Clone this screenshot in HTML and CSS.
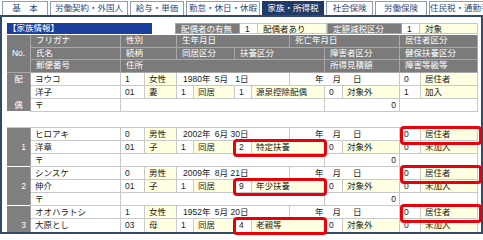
FILE: index.html
```html
<!DOCTYPE html>
<html lang="ja">
<head>
<meta charset="utf-8">
<title>家族・所得税</title>
<link rel="stylesheet" href="styles.css">
</head>
<body>
<div class="tabs">
  <div class="tab w46">基　本</div>
  <div class="tab w78">労働契約・外国人</div>
  <div class="tab w54">給与・単価</div>
  <div class="tab w74">勤怠・休日・休暇</div>
  <div class="tab w62 on">家族・所得税</div>
  <div class="tab w47">社会保険</div>
  <div class="tab w52">労働保険</div>
  <div class="tab w70">住民税・通勤手当</div>
</div>
<div class="frame">
  <div class="topbar">
    <div class="title">【家族情報】</div>
    <div class="lbl lw1">配偶者の有無</div>
    <div class="code">1</div>
    <div class="val vw1">配偶者あり</div>
    <div class="lbl lw2">定額減税区分</div>
    <div class="code">1</div>
    <div class="val vw2">対象</div>
  </div>

  <div class="grid ghead">
    <div class="h hno">No.</div>
    <div class="h">フリガナ</div>
    <div class="h s2">性別</div>
    <div class="h s4">生年月日</div>
    <div class="h s3">死亡年月日</div>
    <div class="h s2">居住者区分</div>
    <div class="h">氏名</div>
    <div class="h s2">続柄</div>
    <div class="h s2">同居区分</div>
    <div class="h s3">扶養区分</div>
    <div class="h s2">障害者区分</div>
    <div class="h s2">健保扶養区分</div>
    <div class="h">郵便番号</div>
    <div class="h s7">住所</div>
    <div class="h s2">所得見積額</div>
    <div class="h s2">障害等級等</div>
  </div>

  <!-- spouse -->
  <div class="grid blk">
    <div class="c n ctr">配</div>
    <div class="c">ヨウコ</div>
    <div class="c">1</div>
    <div class="c y">女性</div>
    <div class="c s4"><span class="dy">1980</span>年<span class="dm">5</span>月<span class="dd">1</span>日</div>
    <div class="c s3"><span class="dy"></span>年<span class="dm"></span>月<span class="dd"></span>日</div>
    <div class="c">0</div>
    <div class="c y">居住者</div>

    <div class="c n"></div>
    <div class="c">洋子</div>
    <div class="c">01</div>
    <div class="c y">妻</div>
    <div class="c">1</div>
    <div class="c y">同居</div>
    <div class="c">1</div>
    <div class="c y s2">源泉控除配偶</div>
    <div class="c">0</div>
    <div class="c y">対象外</div>
    <div class="c">1</div>
    <div class="c y">加入</div>

    <div class="c n ctr e">偶</div>
    <div class="c">〒</div>
    <div class="c s7"></div>
    <div class="c s2 r">0</div>
    <div class="c s2"></div>
  </div>

  <div class="spacer"></div>

  <!-- 1 -->
  <div class="grid blk">
    <div class="c n"></div>
    <div class="c">ヒロアキ</div>
    <div class="c">0</div>
    <div class="c y">男性</div>
    <div class="c s4"><span class="dy">2002</span>年<span class="dm">6</span>月<span class="dd">30</span>日</div>
    <div class="c s3"><span class="dy"></span>年<span class="dm"></span>月<span class="dd"></span>日</div>
    <div class="c rel">0<span class="mk res"></span></div>
    <div class="c y">居住者</div>

    <div class="c n">1</div>
    <div class="c">洋章</div>
    <div class="c">01</div>
    <div class="c y">子</div>
    <div class="c">1</div>
    <div class="c y">同居</div>
    <div class="c rel">2<span class="mk fy"></span></div>
    <div class="c y s2">特定扶養</div>
    <div class="c">0</div>
    <div class="c y">対象外</div>
    <div class="c">0</div>
    <div class="c y">未加入</div>

    <div class="c n e"></div>
    <div class="c">〒</div>
    <div class="c s7"></div>
    <div class="c s2 r">0</div>
    <div class="c s2"></div>
  </div>

  <!-- 2 -->
  <div class="grid blk">
    <div class="c n"></div>
    <div class="c">シンスケ</div>
    <div class="c">0</div>
    <div class="c y">男性</div>
    <div class="c s4"><span class="dy">2009</span>年<span class="dm">8</span>月<span class="dd">21</span>日</div>
    <div class="c s3"><span class="dy"></span>年<span class="dm"></span>月<span class="dd"></span>日</div>
    <div class="c rel">0<span class="mk res"></span></div>
    <div class="c y">居住者</div>

    <div class="c n">2</div>
    <div class="c">伸介</div>
    <div class="c">01</div>
    <div class="c y">子</div>
    <div class="c">1</div>
    <div class="c y">同居</div>
    <div class="c rel">9<span class="mk fy"></span></div>
    <div class="c y s2">年少扶養</div>
    <div class="c">0</div>
    <div class="c y">対象外</div>
    <div class="c">0</div>
    <div class="c y">未加入</div>

    <div class="c n e"></div>
    <div class="c">〒</div>
    <div class="c s7"></div>
    <div class="c s2 r">0</div>
    <div class="c s2"></div>
  </div>

  <!-- 3 -->
  <div class="grid blk">
    <div class="c n"></div>
    <div class="c">オオハラトシ</div>
    <div class="c">1</div>
    <div class="c y">女性</div>
    <div class="c s4"><span class="dy">1952</span>年<span class="dm">5</span>月<span class="dd">20</span>日</div>
    <div class="c s3"><span class="dy"></span>年<span class="dm"></span>月<span class="dd"></span>日</div>
    <div class="c rel">0<span class="mk res"></span></div>
    <div class="c y">居住者</div>

    <div class="c n last">3</div>
    <div class="c last">大原とし</div>
    <div class="c last">03</div>
    <div class="c y last">母</div>
    <div class="c last">1</div>
    <div class="c y last">同居</div>
    <div class="c rel last">4<span class="mk fy"></span></div>
    <div class="c y s2 last">老親等</div>
    <div class="c last">0</div>
    <div class="c y last">対象外</div>
    <div class="c last">0</div>
    <div class="c y last">未加入</div>
  </div>
</div>
</body>
</html>
```

FILE: styles.css
```css
* { box-sizing: border-box; }
html, body { margin: 0; padding: 0; }
body {
  width: 483px;
  height: 236px;
  overflow: hidden;
  background: #fff;
  font-family: "Liberation Sans", "Noto Sans CJK JP", sans-serif;
  font-size: 8.5px;
  color: #1a1a1a;
}

/* tabs */
.tabs {
  display: flex;
  gap: 2px;
  height: 15px;
  padding: 1px 0 0 2px;
  overflow: hidden;
  white-space: nowrap;
}
.tab {
  flex: none;
  height: 14px;
  border: 1px solid #8d9db5;
  border-bottom: none;
  background: #fff;
  color: #2c4a78;
  line-height: 13px;
  text-align: center;
}
.tab.on { background: #1f3a66; border-color: #1f3a66; color: #fff; }
.w46 { width: 46px; }
.w47 { width: 47px; }
.w52 { width: 52px; }
.w54 { width: 54px; }
.w62 { width: 62px; }
.w70 { width: 70px; }
.w74 { width: 74px; }
.w78 { width: 78px; }

/* frame */
.frame {
  width: 483px;
  border: 2px solid #34486a;
  padding: 6px 3px 0 5px;
}

.topbar {
  display: flex;
  height: 11px;
  margin-bottom: 1px;
  line-height: 10px;
}
.topbar > div { flex: none; height: 11px; white-space: nowrap; }
.title {
  width: 145px;
  margin-right: 23px;
  background: #1c3f9e;
  color: #fff;
  padding-left: 1px;
}
.lbl {
  background: #7b7b7b;
  color: #fff;
  padding-left: 5px;
  border: 1px solid #a5a5a5;
}
.lw1 { width: 65px; }
.lw2 { width: 75px; }
.code {
  width: 18px;
  padding-left: 5px;
  border-top: 1px solid #c8c8c8;
  border-bottom: 1px solid #c8c8c8;
  border-right: 1px solid #c8c8c8;
}
.val {
  background: #ffffe1;
  padding-left: 5px;
  border-top: 1px solid #c8c8c8;
  border-bottom: 1px solid #c8c8c8;
  border-right: 1px solid #c8c8c8;
}
.vw1 { width: 69px; }
.vw2 { width: 58px; }

/* grid */
.grid {
  display: grid;
  grid-template-columns: 24px 90px 24px 32px 17px 41px 17px 38px 35px 18px 57px 21px 57px;
}
.ghead { grid-auto-rows: 12.67px; }
.blk { grid-auto-rows: 13px; }
.s2 { grid-column: span 2; }
.s3 { grid-column: span 3; }
.s4 { grid-column: span 4; }
.s7 { grid-column: span 7; }

.h {
  background: #7b7b7b;
  color: #fff;
  border-right: 1px solid #a8a8a8;
  border-bottom: 1px solid #a8a8a8;
  padding-left: 5px;
  line-height: 11.67px;
  white-space: nowrap;
}
.hno {
  grid-row: span 3;
  display: flex;
  align-items: center;
  justify-content: center;
  padding-left: 0;
}

.c {
  border-right: 1px solid #c9c9c9;
  border-bottom: 1px solid #c9c9c9;
  padding: 0 4px;
  line-height: 12px;
  white-space: nowrap;
}
.c.last { border-bottom: none; }
.y { background: #ffffe1; }
.r { text-align: right; padding-right: 3px; }
.n {
  background: #808080;
  color: #fff;
  text-align: right;
  border-right-color: #a0a0a0;
  border-bottom-color: #808080;
}
.n.e { border-bottom-color: #fff; }
.n.ctr { text-align: center; padding: 0; }

.dy, .dm, .dd { display: inline-block; text-align: right; }
.dy { width: 21px; }
.dm { width: 9px; }
.dd { width: 12px; }

.spacer {
  height: 16px;
  border-bottom: 1px solid #c9c9c9;
}

.rel { position: relative; }
.mk {
  position: absolute;
  border: 3px solid #e8000b;
  border-radius: 4px;
  pointer-events: none;
}
.mk.res { left: 0; top: -2px; width: 82px; height: 19px; }
.mk.fy { left: -2px; top: -2px; width: 94px; height: 18px; }
```
